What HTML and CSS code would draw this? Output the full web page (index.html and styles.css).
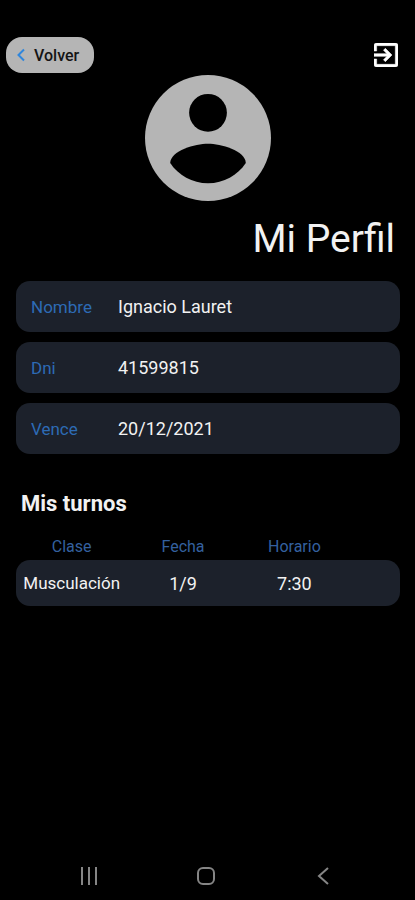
FILE: index.html
```html
<!DOCTYPE html>
<html lang="es">
<head>
<meta charset="utf-8">
<meta name="viewport" content="width=device-width, initial-scale=1">
<title>Mi Perfil</title>
<link rel="stylesheet" href="styles.css">
</head>
<body>
<header class="topbar">
  <button class="back" type="button">
    <svg class="back-icon" viewBox="0 0 8 14" aria-hidden="true"><path d="M7 1.500 1.500 7 7 12.500"/></svg>
    Volver
  </button>
  <button class="logout" type="button" aria-label="Salir">
    <svg class="logout-icon" viewBox="3 3 18 18" aria-hidden="true"><path d="M10.090 15.590 11.500 17l5-5-5-5-1.410 1.410L12.670 11H3v2h9.670zM19 3H5a2 2 0 0 0-2 2v4h2V5h14v14H5v-4H3v4a2 2 0 0 0 2 2h14a2 2 0 0 0 2-2V5a2 2 0 0 0-2-2z"/></svg>
  </button>
</header>
<main class="profile">
  <svg class="avatar" viewBox="2 2 20 20" aria-hidden="true">
    <circle class="avatar-disc" cx="12" cy="12" r="10"/>
    <circle cx="12" cy="8" r="3"/>
    <path d="M12 19.200c-2.500 0-4.710-1.280-6-3.220.03-1.990 4-3.080 6-3.080s5.970 1.090 6 3.080c-1.290 1.940-3.500 3.220-6 3.220z"/>
  </svg>
  <h1 class="title">Mi Perfil</h1>
  <dl class="details">
    <div class="detail"><dt>Nombre</dt><dd>Ignacio Lauret</dd></div>
    <div class="detail"><dt>Dni</dt><dd>41599815</dd></div>
    <div class="detail"><dt>Vence</dt><dd>20/12/2021</dd></div>
  </dl>
  <h2 class="subtitle">Mis turnos</h2>
  <table class="turnos">
    <thead>
      <tr><th scope="col">Clase</th><th scope="col">Fecha</th><th scope="col">Horario</th><td></td></tr>
    </thead>
    <tbody>
      <tr><td class="clase">Musculación</td><td>1/9</td><td>7:30</td><td></td></tr>
    </tbody>
  </table>
</main>
<nav class="system-nav">
  <button type="button" aria-label="Recientes"><svg viewBox="0 0 20 20" aria-hidden="true"><path d="M3 1v18M10 1v18M17 1v18"/></svg></button>
  <button type="button" aria-label="Inicio"><svg viewBox="0 0 20 20" aria-hidden="true"><rect x="2" y="2" width="16" height="16" rx="5"/></svg></button>
  <button type="button" aria-label="Atrás"><svg viewBox="0 0 20 20" aria-hidden="true"><path d="M15 2 6 10l9 8"/></svg></button>
</nav>
</body>
</html>
```
FILE: styles.css
```css
* {
  box-sizing: border-box;
}

body {
  margin: 0;
  min-height: 100vh;
  display: flex;
  flex-direction: column;
  background: #000;
  color: #f2f2f2;
  font-family: Roboto, "Liberation Sans", sans-serif;
}

button {
  border: 0;
  padding: 0;
  background: none;
  font: inherit;
}

svg {
  display: block;
}

.topbar {
  display: flex;
  justify-content: space-between;
  align-items: center;
  padding: 37px 17px 0 6px;
}

.back {
  display: flex;
  align-items: center;
  gap: 9px;
  height: 36px;
  padding: 0 15px 0 11px;
  border-radius: 16px;
  background: #b5b5b5;
  color: #141414;
  font-size: 16px;
  font-weight: 500;
}

.back-icon {
  width: 8px;
  height: 14px;
  fill: none;
  stroke: #2f86dc;
  stroke-width: 2;
}

.logout-icon {
  width: 24px;
  height: 24px;
  fill: #fff;
  stroke: #fff;
  stroke-width: 0.4;
}

.profile {
  flex: 1;
  padding: 2px 15px 0 16px;
}

.avatar {
  width: 126px;
  height: 126px;
  margin: 0 auto;
}

.avatar-disc {
  fill: #b5b5b5;
}

.title {
  margin: 14px 5px 18px 0;
  text-align: right;
  font-size: 39px;
  line-height: 48px;
  font-weight: 400;
}

.details {
  display: grid;
  gap: 10px;
  margin: 0;
}

.detail {
  display: grid;
  grid-template-columns: 87px 1fr;
  align-items: center;
  height: 51px;
  padding: 0 15px;
  border-radius: 14px;
  background: #1c212b;
  font-size: 18px;
}

.detail dt {
  color: #2d6bb5;
  font-size: 17px;
}

.detail dd {
  margin: 0;
}

.subtitle {
  margin: 36px 5px 14px;
  font-size: 22px;
  line-height: 28px;
  font-weight: 700;
}

.turnos {
  width: 100%;
  table-layout: fixed;
  border-collapse: collapse;
  text-align: center;
  font-size: 18px;
}

.turnos th,
.turnos td {
  padding: 0;
}

.turnos th {
  width: 29%;
  height: 28px;
  color: #34609f;
  font-size: 16px;
  font-weight: 400;
}

.turnos tbody td {
  height: 46px;
  background: #1c212b;
}

.turnos tbody td:first-child {
  border-radius: 14px 0 0 14px;
}

.turnos tbody td:last-child {
  border-radius: 0 14px 14px 0;
}

.turnos .clase {
  font-size: 17px;
}

.system-nav {
  display: flex;
  justify-content: space-around;
  align-items: center;
  height: 48px;
  padding: 0 34px 0 30px;
}

.system-nav svg {
  width: 20px;
  height: 20px;
  fill: none;
  stroke: #858585;
  stroke-width: 2;
}
```
